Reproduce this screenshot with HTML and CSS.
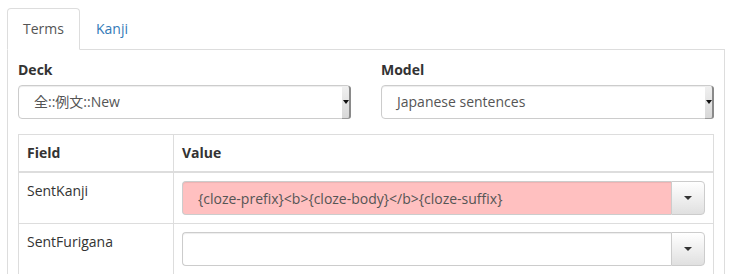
FILE: index.html
```html
<!DOCTYPE html>
<html lang="en">
<head>
  <meta charset="UTF-8" />
  <title>Anki export</title>
  <link rel="stylesheet" href="styles.css">
</head>
<body>
  <div class="wrap">
    <ul class="tabs">
      <li class="tab active"><a href="#">Terms</a></li>
      <li class="tab"><a href="#">Kanji</a></li>
    </ul>

    <div class="panel">
      <div class="form-row">
        <div class="form-group">
          <label>Deck</label>
          <div class="select">
            <span class="select-text">全::例文::New</span>
            <span class="select-btn"><span class="arrow"></span></span>
          </div>
        </div>
        <div class="form-group">
          <label>Model</label>
          <div class="select">
            <span class="select-text">Japanese sentences</span>
            <span class="select-btn"><span class="arrow"></span></span>
          </div>
        </div>
      </div>

      <table class="fields">
        <thead>
          <tr><th class="col-field">Field</th><th>Value</th></tr>
        </thead>
        <tbody>
          <tr>
            <td>SentKanji</td>
            <td>
              <div class="input-group">
                <input type="text" class="input filled" value="{cloze-prefix}<b>{cloze-body}</b>{cloze-suffix}">
                <button class="btn-caret"><span class="caret"></span></button>
              </div>
            </td>
          </tr>
          <tr>
            <td>SentFurigana</td>
            <td>
              <div class="input-group">
                <input type="text" class="input" value="">
                <button class="btn-caret"><span class="caret"></span></button>
              </div>
            </td>
          </tr>
        </tbody>
      </table>
    </div>
  </div>
</body>
</html>
```

FILE: styles.css
```css
body {
  margin: 0;
  font-family: "Open Sans", "Noto Sans CJK JP", sans-serif;
  font-size: 14px;
  line-height: 20px;
  color: #333;
  background: #fff;
  height: 274px;
  overflow: hidden;
}

.wrap {
  width: 718px;
  margin: 8px 0 0 7px;
}

.tabs {
  list-style: none;
  margin: 0;
  padding: 0;
  display: flex;
  border-bottom: 1px solid #ddd;
}

.tab { margin: 0 0 -1px 0; }

.tab a {
  display: block;
  padding: 10px 15px;
  border: 1px solid transparent;
  border-radius: 4px 4px 0 0;
  color: #337ab7;
  text-decoration: none;
}

.tab.active a {
  color: #555;
  background: #fff;
  border-color: #ddd;
  border-bottom-color: #fff;
}

.panel {
  border: 1px solid #ddd;
  border-top: none;
  padding: 10px 10px 0;
  height: 214px;
  overflow: hidden;
}

.form-row {
  display: grid;
  grid-template-columns: 1fr 1fr;
  column-gap: 30px;
}

.form-group { margin-bottom: 15px; }

label {
  display: block;
  font-weight: bold;
  margin-bottom: 5px;
}

.select {
  display: flex;
  height: 34px;
  box-sizing: border-box;
  border: 1px solid #ccc;
  border-radius: 4px;
  color: #555;
  box-shadow: inset 0 1px 1px rgba(0,0,0,.075);
}

.select-text {
  flex: 1;
  padding: 6px 15px;
}

.select-btn {
  width: 7px;
  margin: 0 -1px -1px 0;
  background: linear-gradient(#f0f0f0, #d8d8d8);
  border-right: 2px solid #8a8a8a;
  border-bottom: 1px solid #9a9a9a;
  border-radius: 0 3px 3px 0;
  display: flex;
  align-items: center;
  justify-content: center;
}

.arrow {
  border-top: 4px solid #111;
  border-left: 3px solid transparent;
  border-right: 3px solid transparent;
}

.fields {
  width: 100%;
  border-collapse: collapse;
  border: 1px solid #ddd;
}

.fields th, .fields td {
  border: 1px solid #ddd;
  padding: 8px;
  text-align: left;
  vertical-align: top;
}

.fields th { border-bottom-width: 2px; }

.col-field { width: 138px; }

.input-group { display: flex; }

.input {
  flex: 1;
  min-width: 0;
  height: 34px;
  box-sizing: border-box;
  padding: 6px 15px;
  border: 1px solid #ccc;
  border-right: none;
  border-radius: 4px 0 0 4px;
  font: inherit;
  color: #555;
  background: #fff;
  box-shadow: inset 0 1px 1px rgba(0,0,0,.075);
}

.input.filled { background: #ffc0c0; }

.btn-caret {
  width: 34px;
  height: 34px;
  border: 1px solid #ccc;
  border-radius: 0 4px 4px 0;
  background: linear-gradient(#fff, #e0e0e0);
  display: flex;
  align-items: center;
  justify-content: center;
  padding: 0;
}

.caret {
  border-top: 4px solid #333;
  border-left: 4px solid transparent;
  border-right: 4px solid transparent;
}
```
